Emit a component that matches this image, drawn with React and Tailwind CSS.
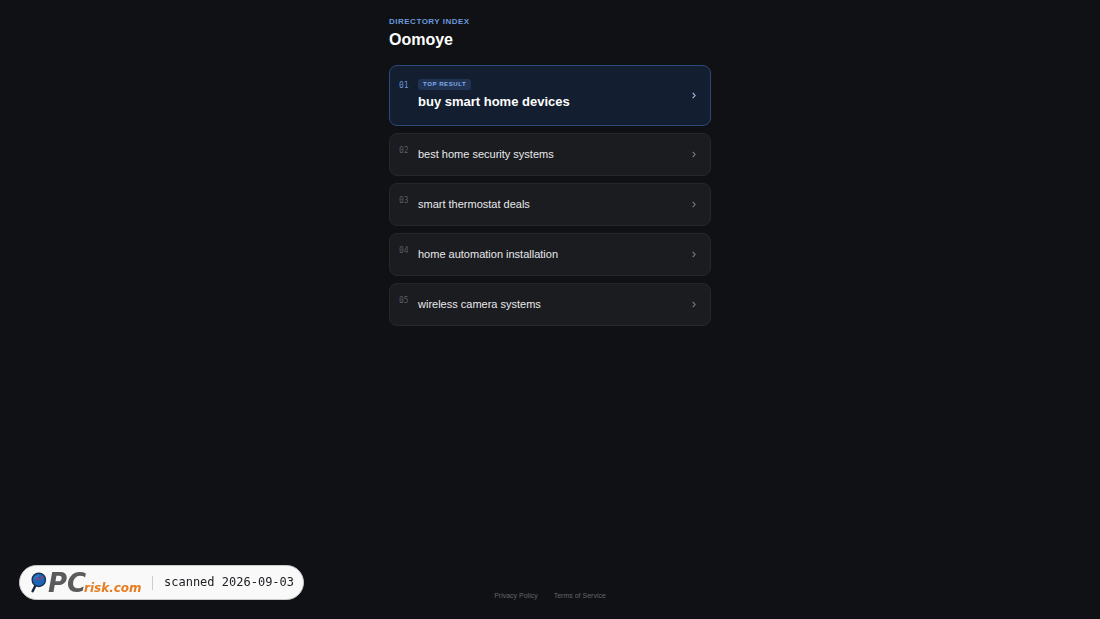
import React from "react";
import clsx from "clsx";

const results = [
  { id: "01", label: "buy smart home devices", top: true },
  { id: "02", label: "best home security systems" },
  { id: "03", label: "smart thermostat deals" },
  { id: "04", label: "home automation installation" },
  { id: "05", label: "wireless camera systems" },
];

const Chevron = ({ className }) => (
  <svg
    viewBox="0 0 4 7"
    className={clsx("h-[7px] w-1 shrink-0", className)}
    fill="none"
    stroke="currentColor"
    strokeWidth="1.1"
    aria-hidden="true"
  >
    <path d="M0.7 0.8 3.1 3.5 0.7 6.2" />
  </svg>
);

const ResultLink = ({ item }) => (
  <a
    href="#"
    className={clsx(
      "flex items-center rounded-lg border py-3 pr-3.5 pl-[9px]",
      item.top ? "border-[#2c4a77] bg-[#131e30]" : "border-[#26272c] bg-[#1b1c20]"
    )}
  >
    <span
      className={clsx(
        "w-[19px] shrink-0 self-start font-['DejaVu_Sans_Mono',monospace] text-[8px] leading-[10px]",
        item.top ? "pt-[3px] text-[#6c95d8]" : "text-[#5a5b60]"
      )}
    >
      {item.id}
    </span>
    <span className="min-w-0 flex-1">
      {item.top && (
        <span className="mt-px flex">
          <span className="rounded-[3px] bg-[#213352] px-[5px] py-px text-[6px] leading-[9px] font-bold tracking-[0.1em] text-[#86adee] uppercase">
            Top Result
          </span>
        </span>
      )}
      <span
        className={clsx(
          "block",
          item.top
            ? "mt-[3px] pb-[2px] text-[13px] leading-[18px] font-bold text-white"
            : "pb-px text-[11px] leading-4 text-[#e8e9ec]"
        )}
      >
        {item.label}
      </span>
    </span>
    <Chevron className={item.top ? "text-[#a9c5f5]" : "text-[#7b7c81]"} />
  </a>
);

const PcRiskLogo = () => (
  <svg
    viewBox="0 0 112 24"
    className="h-6 w-28 shrink-0 overflow-visible"
    role="img"
    aria-label="PCrisk.com"
  >
    <path d="M5.6 14.2 2.6 20.2" stroke="#15243c" strokeWidth="2.4" strokeLinecap="round" />
    <circle cx="8.8" cy="8.8" r="6.7" fill="#1b63b8" stroke="#17304f" strokeWidth="1.3" />
    <path d="M4.4 8.3Q5.2 4.9 9 4.5" stroke="#4d89ca" strokeWidth="1" fill="none" />
    <path d="m6 9.6 1.8-2 2 1.2 2.4-2.8" stroke="#b23a62" strokeWidth="0.9" fill="none" />
    <g fill="#d73247">
      <circle cx="7.6" cy="7.4" r="0.9" />
      <circle cx="12.1" cy="5.9" r="1" />
    </g>
    <g fontFamily="'DejaVu Sans', sans-serif" fontWeight="bold" fontStyle="italic">
      <text x="18" y="21" fontSize="26" fill="#5b5b5d">
        PC
      </text>
      <text x="54" y="21" fontSize="12" fill="#e87d20" stroke="#f9f9fa" strokeWidth="2" paintOrder="stroke">
        risk.com
      </text>
    </g>
  </svg>
);

const App = () => (
  <div className="flex min-h-screen flex-col bg-[#0f1114] font-['Liberation_Sans',Arial,sans-serif]">
    <main className="mx-auto w-full max-w-[322px] flex-1 pt-4">
      <p className="text-[8px] leading-[11px] font-bold tracking-[0.5px] text-[#6c98de] uppercase">
        Directory Index
      </p>
      <h1 className="mt-[3px] text-base leading-5 font-bold text-white">Oomoye</h1>
      <nav aria-label="Results" className="mt-[15px] flex flex-col gap-[7px]">
        {results.map((item) => (
          <ResultLink key={item.id} item={item} />
        ))}
      </nav>
    </main>

    <footer className="flex justify-center gap-4 pb-[18px] text-[7px] leading-[10px] text-[#64656a]">
      <a href="#">Privacy Policy</a>
      <a href="#">Terms of Service</a>
    </footer>

    <div className="fixed bottom-[19px] left-[19px] flex h-[35px] items-center rounded-full border border-[#c9cacc] bg-[#f9f9fa] pr-[9px] pl-[10px]">
      <PcRiskLogo />
      <span className="ml-[10px] h-3.5 w-px bg-[#cdcdcf]" />
      <span className="ml-[11px] pb-[2px] font-['DejaVu_Sans_Mono',monospace] text-xs whitespace-nowrap text-[#202124]">
        scanned 2026-09-03
      </span>
    </div>
  </div>
);

export default App;
